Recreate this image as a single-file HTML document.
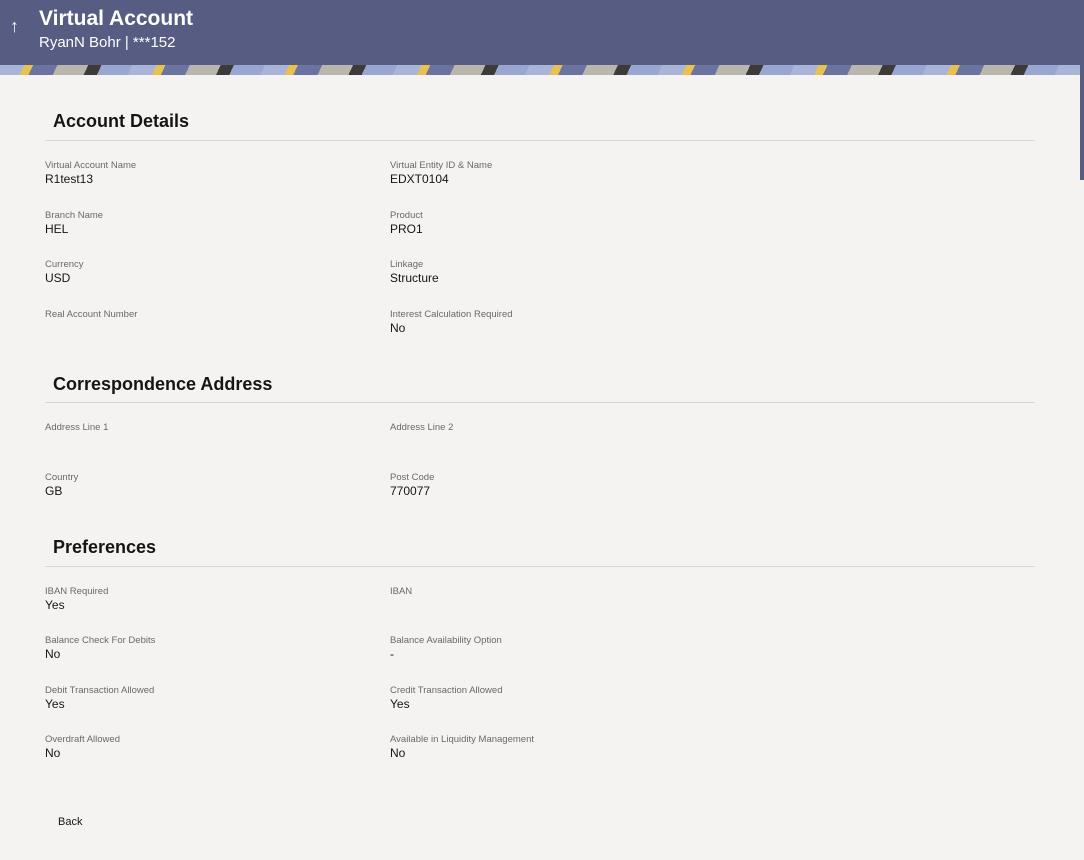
<!DOCTYPE html>
<html><head><style>
*{margin:0;padding:0;box-sizing:border-box}
body{width:1084px;height:860px;overflow:hidden;background:#f4f3f1;font-family:"Liberation Sans",sans-serif;position:relative}
.hdr{position:absolute;left:0;top:0;width:1084px;height:65px;background:#575d82}
.strip{position:absolute;left:0;top:65px;width:1084px;height:10px;background:repeating-linear-gradient(115deg,#a9b4d8 0 22px,#e8c24e 22px 30px,#6b73a0 30px 52px,#b9b6ae 52px 80px,#3c3b3a 80px 92px,#9aa6d2 92px 120px)}
.sb{position:absolute;left:1080px;top:65px;width:4px;height:115px;background:#575d82}
.t{position:absolute;color:#fff}
.h{position:absolute;left:53px;font-size:18px;font-weight:bold;color:#161513}
.ln{position:absolute;left:45px;width:990px;height:1px;background:#d8d6d3}
.l{position:absolute;font-size:9.5px;color:#6b6966}
.v{position:absolute;font-size:12px;color:#161513}
</style></head><body>
<div class="hdr"></div>
<div class="strip"></div>
<div class="sb"></div>
<div class="t" style="left:10px;top:16px;font-size:18px">&#8593;</div>
<div class="t" style="left:39px;top:7px;font-size:21px;font-weight:bold">Virtual Account</div>
<div class="t" style="left:39px;top:34px;font-size:15px">RyanN Bohr | ***152</div>

<div class="h" style="top:111px">Account Details</div><div class="ln" style="top:140px"></div>
<div class="l" style="left:45px;top:160px">Virtual Account Name</div><div class="v" style="left:45px;top:172px">R1test13</div>
<div class="l" style="left:390px;top:160px">Virtual Entity ID &amp; Name</div><div class="v" style="left:390px;top:172px">EDXT0104</div>
<div class="l" style="left:45px;top:210px">Branch Name</div><div class="v" style="left:45px;top:222px">HEL</div>
<div class="l" style="left:390px;top:210px">Product</div><div class="v" style="left:390px;top:222px">PRO1</div>
<div class="l" style="left:45px;top:259px">Currency</div><div class="v" style="left:45px;top:271px">USD</div>
<div class="l" style="left:390px;top:259px">Linkage</div><div class="v" style="left:390px;top:271px">Structure</div>
<div class="l" style="left:45px;top:309px">Real Account Number</div>
<div class="l" style="left:390px;top:309px">Interest Calculation Required</div><div class="v" style="left:390px;top:321px">No</div>

<div class="h" style="top:374px">Correspondence Address</div><div class="ln" style="top:402px"></div>
<div class="l" style="left:45px;top:422px">Address Line 1</div>
<div class="l" style="left:390px;top:422px">Address Line 2</div>
<div class="l" style="left:45px;top:472px">Country</div><div class="v" style="left:45px;top:484px">GB</div>
<div class="l" style="left:390px;top:472px">Post Code</div><div class="v" style="left:390px;top:484px">770077</div>

<div class="h" style="top:537px">Preferences</div><div class="ln" style="top:566px"></div>
<div class="l" style="left:45px;top:586px">IBAN Required</div><div class="v" style="left:45px;top:598px">Yes</div>
<div class="l" style="left:390px;top:586px">IBAN</div>
<div class="l" style="left:45px;top:635px">Balance Check For Debits</div><div class="v" style="left:45px;top:647px">No</div>
<div class="l" style="left:390px;top:635px">Balance Availability Option</div><div class="v" style="left:390px;top:647px">-</div>
<div class="l" style="left:45px;top:685px">Debit Transaction Allowed</div><div class="v" style="left:45px;top:697px">Yes</div>
<div class="l" style="left:390px;top:685px">Credit Transaction Allowed</div><div class="v" style="left:390px;top:697px">Yes</div>
<div class="l" style="left:45px;top:734px">Overdraft Allowed</div><div class="v" style="left:45px;top:746px">No</div>
<div class="l" style="left:390px;top:734px">Available in Liquidity Management</div><div class="v" style="left:390px;top:746px">No</div>

<div class="v" style="left:58px;top:816px;font-size:11px">Back</div>
</body></html>
